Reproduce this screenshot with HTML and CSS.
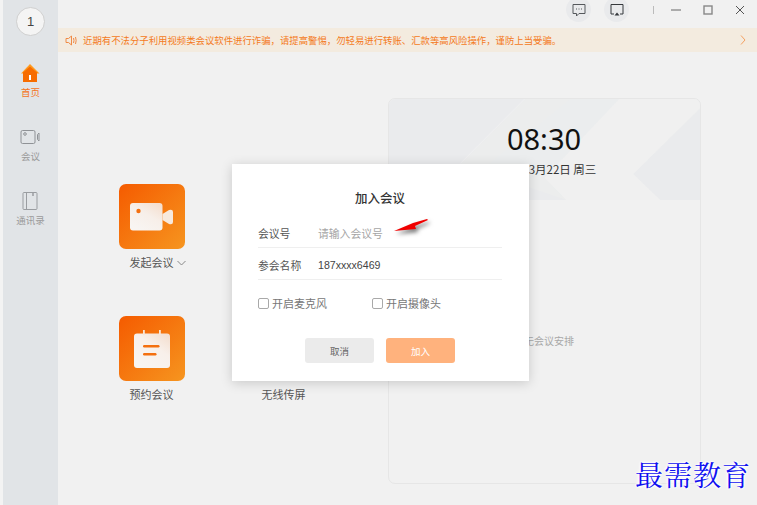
FILE: index.html
```html
<!DOCTYPE html>
<html lang="zh-CN">
<head>
<meta charset="utf-8">
<title>会议</title>
<link rel="stylesheet" href="styles.css">
</head>
<body>
<div class="app">
  <aside class="sidebar">
    <div class="avatar">1</div>
    <nav class="nav">
      <div class="nav-item active">
        <div class="nav-icon">
          <svg width="20" height="20" viewBox="0 0 20 20"><path d="M10 1 L19.5 10.5 L1 10.5 Z" fill="#ff9a1f"/><path d="M3 9.5 L10 3.5 L17 9.5 V19 H3 Z" fill="#f76c00"/><rect x="9" y="12" width="2" height="5" fill="#fff"/></svg>
        </div>
        <span>首页</span>
      </div>
      <div class="nav-item">
        <div class="nav-icon">
          <svg width="20" height="16" viewBox="0 0 20 16" fill="none" stroke="#8f9296"><rect x="1" y="1.5" width="14" height="13" rx="1.5"/><circle cx="5" cy="5" r="1.3"/><path d="M17.5 5.5 L19 4 V12 L17.5 10.5 Z"/></svg>
        </div>
        <span>会议</span>
      </div>
      <div class="nav-item">
        <div class="nav-icon">
          <svg width="16" height="20" viewBox="0 0 16 20" fill="none" stroke="#9a9da1"><rect x="1" y="1.5" width="14" height="17" rx="1"/><path d="M4.5 1.5 V18.5"/><path d="M11 1.5 V5" stroke-width="1.5"/></svg>
        </div>
        <span>通讯录</span>
      </div>
    </nav>
  </aside>

  <main class="main">
    <header class="titlebar">
      <div class="round-btn">
        <svg width="14" height="14" viewBox="0 0 14 14" fill="none" stroke="#55585c"><path d="M1 1.5 H13 V10.5 H7 L4.5 13 V10.5 H1 Z"/><path d="M4 6 H5 M6.5 6 H7.5 M9 6 H10"/></svg>
      </div>
      <div class="round-btn">
        <svg width="14" height="14" viewBox="0 0 14 14" fill="none" stroke="#35383c"><path d="M4 11 H1 V1.5 H13 V11 H10"/><path d="M7 9.5 L9.5 12.5 H4.5 Z" fill="#35383c" stroke="none"/></svg>
      </div>
      <div class="win-sep"></div>
      <div class="win-btns">
        <svg width="12" height="12" viewBox="0 0 12 12" stroke="#666"><path d="M1 6 H11"/></svg>
        <svg width="12" height="12" viewBox="0 0 12 12" fill="none" stroke="#888" stroke-width="1.400"><rect x="2" y="2" width="8" height="8"/></svg>
        <svg width="12" height="12" viewBox="0 0 12 12" stroke="#555"><path d="M2 2 L10 10 M10 2 L2 10"/></svg>
      </div>
    </header>

    <div class="banner">
      <svg class="speaker" width="12" height="11" viewBox="0 0 12 11" fill="none" stroke="#f08a45"><path d="M1 3.500 H3.500 L6.500 1 V10 L3.500 7.500 H1 Z"/><path d="M8.500 3 Q9.500 5.500 8.500 8 M10.500 2 Q11.800 5.500 10.500 9"/></svg>
      <span class="banner-text">近期有不法分子利用视频类会议软件进行诈骗，请提高警惕，勿轻易进行转账、汇款等高风险操作，谨防上当受骗。</span>
      <svg width="6" height="10" viewBox="0 0 6 10" fill="none" stroke="#f4a060"><path d="M1 .5 L5 5 L1 9.500"/></svg>
    </div>

    <section class="content">
      <div class="tiles">
        <div class="tile">
          <div class="tile-icon">
            <svg width="44" height="28" viewBox="0 0 44 28">
              <defs><linearGradient id="camGrad" x1="1" y1="0" x2="0.300" y2="1"><stop offset="0" stop-color="#f4dccb"/><stop offset="0.500" stop-color="#f7efe9"/><stop offset="1" stop-color="#f8f5f2"/></linearGradient></defs>
              <rect x="0" y="0" width="32.500" height="27.500" rx="3" fill="url(#camGrad)"/>
              <circle cx="8.500" cy="8" r="2.200" fill="#f4700f"/>
              <path d="M32.500 11 L39 7 Q43 6 43 9 V19 Q43 22 39 21 L32.500 17 Z" fill="#f7e9dd"/>
            </svg>
          </div>
          <div class="tile-label">发起会议<svg class="caret" width="9" height="6" viewBox="0 0 9 6" fill="none" stroke="#888"><path d="M.5 1 L4.500 5 L8.500 1"/></svg></div>
        </div>
        <div class="tile"></div>
        <div class="tile">
          <div class="tile-icon">
            <svg width="36" height="38" viewBox="0 0 36 38">
              <defs><linearGradient id="calGrad" x1="1" y1="0" x2="0.300" y2="1"><stop offset="0" stop-color="#f3dccb"/><stop offset="0.450" stop-color="#f8f0ea"/><stop offset="1" stop-color="#f8f5f2"/></linearGradient></defs>
              <rect x="0" y="3.500" width="36" height="34.500" rx="3" fill="url(#calGrad)"/>
              <rect x="9" y="0" width="1.800" height="5" fill="#f8e6d8"/>
              <rect x="25" y="0" width="1.800" height="5" fill="#f8e6d8"/>
              <rect x="9" y="15" width="16.500" height="2.400" rx="1.200" fill="#f4700f"/>
              <rect x="9" y="23" width="13.500" height="2.400" rx="1.200" fill="#f4700f"/>
            </svg>
          </div>
          <div class="tile-label">预约会议</div>
        </div>
        <div class="tile">
          <div class="tile-icon tile-icon-empty"></div>
          <div class="tile-label">无线传屏</div>
        </div>
      </div>

      <div class="card">
        <div class="card-head">
          <svg class="card-art" viewBox="0 0 312 101" preserveAspectRatio="none">
            <rect width="312" height="101" fill="#eaebed"/>
            <polygon points="137,0 312,0 312,10 245,75 272,101 178,101 72,65 137,0" fill="#eceded"/>
            <polygon points="182,0 312,0 312,9 245,75 272,101 178,101 156,79 100,65" fill="#ebedee"/>
            <polygon points="231,0 312,0 312,9 245,75 272,101 178,101 156,79" fill="#f0f0f0"/>
            <path d="M136 0 L71 65" stroke="#f0f0f1" fill="none"/>
          </svg>
          <div class="clock">08:30</div>
          <div class="date">2023年3月22日 周三</div>
        </div>
        <div class="card-body">暂无会议安排</div>
      </div>
    </section>
  </main>

  <div class="dialog">
    <h2 class="dialog-title">加入会议</h2>
    <div class="field">
      <span class="field-label">会议号</span>
      <span class="placeholder">请输入会议号</span>
    </div>
    <div class="field">
      <span class="field-label">参会名称</span>
      <span class="field-value">187xxxx6469</span>
    </div>
    <div class="options">
      <label class="option"><span class="check"></span>开启麦克风</label>
      <label class="option"><span class="check"></span>开启摄像头</label>
    </div>
    <div class="actions">
      <div class="btn btn-cancel">取消</div>
      <div class="btn btn-join">加入</div>
    </div>
  </div>

  <svg class="arrow" width="40" height="20" viewBox="0 0 40 20"><polygon points="1,14 20,6 34,2 35,3 22,9 23,12" fill="#f00000"/></svg>

  <div class="watermark">最需教育</div>
</div>
</body>
</html>
```

FILE: styles.css
```css
* { box-sizing: border-box; }
html, body { margin: 0; height: 100%; overflow: hidden; }
body {
  background: #f1f1f1;
  font-family: "Noto Sans CJK SC", "Liberation Sans", sans-serif;
  color: #555;
}
.app {
  position: relative;
  display: flex;
  width: 757px;
  height: 505px;
  padding-left: 3px;
  background: #f3f3f3;
  overflow: hidden;
}

/* sidebar */
.sidebar {
  flex: 0 0 55px;
  display: flex;
  flex-direction: column;
  align-items: center;
  padding-top: 7px;
  background: #e1e4e7;
}
.avatar {
  width: 29px;
  height: 29px;
  border-radius: 50%;
  border: 1px solid #cfcfcf;
  background: #f4f4f4;
  display: flex;
  align-items: center;
  justify-content: center;
  font: 13px "Liberation Sans", sans-serif;
  color: #444;
}
.nav {
  display: flex;
  flex-direction: column;
  gap: 28px;
  margin-top: 26px;
}
.nav-item {
  display: flex;
  flex-direction: column;
  align-items: center;
  gap: 2px;
  font-size: 9.500px;
  line-height: 12px;
  color: #9a9a9a;
}
.nav-item.active { color: #f4741c; }
.nav-icon {
  height: 22px;
  display: flex;
  align-items: center;
  justify-content: center;
}

/* main */
.main {
  flex: 1;
  min-width: 0;
  display: flex;
  flex-direction: column;
  background: #f1f1f1;
}
.titlebar {
  flex: 0 0 28px;
  display: flex;
  justify-content: flex-end;
  align-items: flex-start;
  background: #f1f1f1;
}
.round-btn {
  width: 25px;
  height: 25px;
  margin: -3px 0 0 13px;
  border-radius: 50%;
  background: #e9eaec;
  display: flex;
  align-items: center;
  justify-content: center;
}
.win-sep {
  width: 1px;
  height: 8px;
  margin: 6px 0 0 24px;
  background: #bbb;
}
.win-btns {
  display: flex;
  gap: 20px;
  margin: 4px 11px 0 16px;
}
.banner {
  flex: 0 0 24px;
  display: flex;
  align-items: center;
  padding: 0 11px 0 7px;
  background: #f3ebdf;
  color: #f47a22;
  font-size: 9.400px;
}
.speaker { flex: none; margin-right: 6px; }
.banner-text { flex: 1; white-space: nowrap; }

/* content */
.content {
  flex: 1;
  display: flex;
  justify-content: space-between;
  padding: 46px 56.500px 21px 60.500px;
}
.tiles {
  display: grid;
  grid-template-columns: 66px 66px;
  grid-auto-rows: 132px;
  column-gap: 66px;
  padding-top: 86px;
}
.tile {
  display: flex;
  flex-direction: column;
  align-items: center;
  white-space: nowrap;
}
.tile-icon {
  width: 66px;
  height: 65px;
  flex: none;
  border-radius: 7px;
  background: linear-gradient(135deg, #f55b00, #f6951f);
  display: flex;
  align-items: center;
  justify-content: center;
}
.tile-icon-empty { background: #f1f1f1; }
.tile-label {
  margin-top: 5px;
  font-size: 11px;
  line-height: 16px;
  color: #555;
  position: relative;
}
.caret {
  position: absolute;
  left: 100%;
  top: 6px;
  margin-left: 3px;
}

/* card */
.card {
  width: 313px;
  border: 1px solid #e6e6e6;
  border-radius: 7px;
  overflow: hidden;
  display: flex;
  flex-direction: column;
}
.card-head {
  position: relative;
  flex: 0 0 101px;
  display: flex;
  flex-direction: column;
  align-items: center;
  padding-top: 20px;
}
.card-art {
  position: absolute;
  inset: 0;
  width: 100%;
  height: 100%;
}
.clock {
  position: relative;
  font: 29px/40px "Noto Sans", sans-serif;
  color: #111;
}
.date {
  position: relative;
  margin-top: 3px;
  font-size: 11.500px;
  line-height: 14px;
  color: #333;
  white-space: nowrap;
}
.card-body {
  flex: 1;
  text-align: center;
  padding-top: 134px;
  font-size: 10px;
  line-height: 14px;
  color: #a8a8a8;
}

/* dialog */
.dialog {
  position: absolute;
  left: 232px;
  top: 164px;
  width: 297px;
  height: 217px;
  padding: 24px 27px 18px 26px;
  background: #fff;
  box-shadow: 0 2px 11px rgba(0, 0, 0, .17);
  display: flex;
  flex-direction: column;
}
.dialog-title {
  margin: 0 0 8px;
  text-align: center;
  font-size: 12.500px;
  line-height: 20px;
  font-weight: 500;
  color: #333;
}
.field {
  height: 32px;
  padding-top: 2px;
  display: flex;
  align-items: center;
  border-bottom: 1px solid #efefef;
  font-size: 10.800px;
}
.field-label { width: 60px; color: #555; }
.placeholder { color: #a5a5a5; }
.field-value { color: #444; font-family: "Liberation Sans", sans-serif; font-size: 10.600px; }
.options {
  display: flex;
  gap: 45px;
  margin-top: 15px;
  height: 16px;
}
.option {
  display: flex;
  align-items: center;
  font-size: 11px;
  line-height: 16px;
  color: #777;
}
.check {
  width: 11px;
  height: 11px;
  margin-right: 3px;
  border: 1px solid #a9a9a9;
  border-radius: 2px;
  background: #fff;
}
.actions {
  display: flex;
  justify-content: flex-end;
  gap: 12px;
  margin-top: auto;
  padding-right: 47px;
}
.btn {
  width: 69px;
  height: 25px;
  border-radius: 3px;
  display: flex;
  align-items: center;
  justify-content: center;
  font-size: 9.500px;
}
.btn-cancel { background: #ebebeb; color: #666; }
.btn-join { background: #ffb27d; color: #fff; }

/* annotations on top of the screenshot */
.arrow {
  position: absolute;
  left: 393px;
  top: 217px;
  filter: drop-shadow(2px 3px 2px rgba(0, 0, 0, .55));
}
.watermark {
  position: absolute;
  left: 635px;
  top: 458px;
  font-family: "Noto Serif CJK SC", "AR PL UKai CN", "Noto Sans CJK SC", serif;
  font-size: 28px;
  line-height: 32px;
  letter-spacing: 1px;
  white-space: nowrap;
  color: #1010f0;
  text-shadow: 0 0 2px #fff, 0 0 2px #fff, 0 0 3px #fff, 0 0 3px #fff, 0 0 4px #fff;
}
```
